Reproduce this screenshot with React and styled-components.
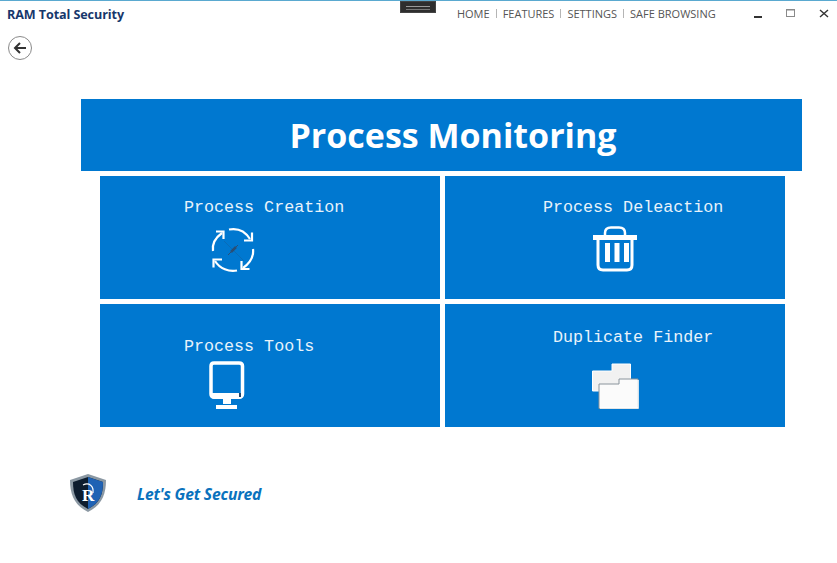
import React from "react";
import styled, { createGlobalStyle } from "styled-components";

const Global = createGlobalStyle`
  html, body {
    margin: 0;
    padding: 0;
    background: #fff;
  }
`;

const Page = styled.div`
  position: relative;
  width: 837px;
  height: 563px;
  box-sizing: border-box;
  border-top: 1px solid #5aa9d0;
  overflow: hidden;
  background: #fff;
  font-family: "Open Sans", "Noto Sans", sans-serif;
`;

const TitleBar = styled.header`
  display: flex;
  align-items: flex-start;
  height: 26px;
`;

const AppName = styled.div`
  padding: 5px 0 0 7px;
  font-size: 12.6px;
  line-height: 17px;
  font-weight: 700;
  letter-spacing: -0.1px;
  color: #17376b;
`;

const Nav = styled.nav`
  display: flex;
  align-items: center;
  margin-left: 333px;
  padding-top: 5px;
  height: 15px;
`;

const NavItem = styled.span`
  font-size: 11px;
  line-height: 15px;
  color: #555;
`;

const NavSep = styled.span`
  width: 1px;
  height: 9px;
  margin: 0 6px;
  background: #b5b5b5;
`;

const WindowButtons = styled.div`
  display: flex;
  margin-left: 37px;
  gap: 23px;
  padding-top: 8px;
`;

const WinIcon = styled.svg`
  display: block;
  width: 10px;
  height: 10px;
`;

const Handle = styled.div`
  position: absolute;
  top: 0;
  left: 400px;
  width: 36px;
  height: 12px;
  box-sizing: border-box;
  background: #2e2e2e;
  border: 1px solid #444;
  &::after {
    content: "";
    position: absolute;
    left: 5px;
    right: 5px;
    top: 4px;
    height: 2px;
    border-top: 1px solid #999;
    border-bottom: 1px solid #777;
  }
`;

const BackButton = styled.button`
  display: flex;
  align-items: center;
  justify-content: center;
  width: 24px;
  height: 24px;
  margin: 9px 0 0 8px;
  padding: 0;
  box-sizing: border-box;
  border: 1px solid #8a8a8a;
  border-radius: 50%;
  background: #fff;
`;

const Main = styled.main`
  width: 721px;
  margin: 39px 0 0 81px;
`;

const Banner = styled.h1`
  display: flex;
  align-items: center;
  justify-content: center;
  height: 72px;
  margin: 0;
  padding-left: 23px;
  box-sizing: border-box;
  background: #0078d0;
  color: #fff;
  font-size: 34px;
  font-weight: 700;
`;

const Grid = styled.div`
  display: grid;
  grid-template-columns: 340px 340px;
  grid-auto-rows: 123px;
  gap: 5px;
  margin: 5px 0 0 19px;
`;

const Card = styled.div`
  padding-top: ${(p) => p.$top}px;
  box-sizing: border-box;
  background: #0078d0;
  color: #fff;
`;

const CardTitle = styled.div`
  margin-left: ${(p) => p.$x}px;
  font-family: "Liberation Mono", "DejaVu Sans Mono", monospace;
  font-size: 16.7px;
  line-height: 20px;
  white-space: pre;
  color: #e8f3fb;
`;

const CardIcon = styled.svg`
  display: block;
  margin: ${(p) => p.$gap}px 0 0 ${(p) => p.$x}px;
  overflow: visible;
`;

const Footer = styled.footer`
  display: flex;
  align-items: center;
  margin: 47px 0 0 69px;
  height: 38px;
`;

const Tagline = styled.span`
  margin: 2px 0 0 30px;
  font-size: 15.7px;
  font-weight: 700;
  font-style: italic;
  letter-spacing: -0.2px;
  color: #0a72bd;
`;

const CreationIcon = () => (
  <CardIcon $x={111} $gap={10} width="44" height="44" viewBox="0 0 44 44" fill="none" stroke="#fff" strokeWidth="2.200">
    <path d="M2 23 C1 16 4 10 11 5" />
    <path d="M5 3.500 H12.500 V11" />
    <path d="M18 1.500 C26 0 34 3 39 11" />
    <path d="M41 4.500 V12.500 H33" />
    <path d="M42 21 C43 29 39 35 32 40" />
    <path d="M38.500 41 H30.500 V33" />
    <path d="M26 42.500 C18 44 9 41 4 33" />
    <path d="M2.500 39.500 V31.500 H11" />
    <path d="M17 27 L27 17" stroke="#2a4f76" strokeWidth="1" />
    <path d="M20 24 L25 19" stroke="#2a4f76" strokeWidth="2.500" />
    <path d="M13 13 L33 33" stroke="#24466a" strokeWidth="0.500" opacity="0.5" />
  </CardIcon>
);

const TrashIcon = () => (
  <CardIcon $x={148} $gap={8} width="44" height="46" viewBox="0 0 44 46">
    <path fill="none" stroke="#fff" strokeWidth="2.500" d="M12 10 V7 Q12 1.500 18 1.500 H26 Q32 1.500 32 7 V10" />
    <path fill="#fff" d="M0 9 H44 V14 H0 Z" />
    <path fill="none" stroke="#fff" strokeWidth="3" d="M5 13 V39 Q5 44 10 44 H34 Q39 44 39 39 V13" />
    <path fill="#fff" d="M12 17 H17 V36 H12 Z M21.500 17 H26.500 V36 H21.500 Z M31 17 H36 V36 H31 Z" />
  </CardIcon>
);

const MonitorIcon = () => (
  <CardIcon $x={109} $gap={4} width="36" height="48" viewBox="0 0 36 48">
    <path fill="none" stroke="#fff" strokeWidth="3.500" d="M5 2 H30 Q33.500 2 33.500 5 V33 Q33.500 36 30 36 H5 Q2 36 2 33 V5 Q2 2 5 2 Z" />
    <path fill="#fff" d="M2 32 H34 V34 Q34 38 30 38 H5 Q2 38 2 34 Z" />
    <rect x="30" y="32" width="2" height="4" fill="#24466a" />
    <path fill="#fff" d="M14 38 H22 V43 H14 Z M7 44 H28 V48 H7 Z" />
  </CardIcon>
);

const FoldersIcon = () => (
  <CardIcon $x={147} $gap={15} width="47" height="46" viewBox="0 0 47 46">
    <path fill="#f1f1f1" stroke="#fff" d="M0.500 8 H20 V1 H38.500 V28 H0.500 Z" />
    <path fill="#fbfbfb" stroke="#8a949c" d="M7 22 V21 H27 V16 H46 V45.500 H7 Z" />
    <path fill="none" stroke="#fff" strokeWidth="1.500" d="M8 45 H46 V17" />
  </CardIcon>
);

const ShieldLogo = () => (
  <svg width="38" height="38" viewBox="0 0 38 38">
    <path fill="#8b98a3" d="M19 0 L37 6 C37 20 33 31 19 38 C5 31 1 20 1 6 Z" />
    <path fill="#0d1c2e" d="M19 3 L34 8 C34 20 31 29 19 35 C7 29 4 20 4 8 Z" />
    <path fill="#1f62b4" d="M19 3 L34 8 C34 20 31 29 19 35 Z" />
    <path fill="none" stroke="#fff" strokeWidth="1.200" d="M14 11 C20 8 25 12 24 19" />
    <text x="13" y="27" fill="#fff" fontFamily="Liberation Serif, serif" fontWeight="700" fontSize="17">R</text>
  </svg>
);

const App = () => (
  <Page>
    <Global />
    <Handle />
    <TitleBar>
      <AppName>RAM Total Security</AppName>
      <Nav>
        <NavItem>HOME</NavItem>
        <NavSep />
        <NavItem>FEATURES</NavItem>
        <NavSep />
        <NavItem>SETTINGS</NavItem>
        <NavSep />
        <NavItem>SAFE BROWSING</NavItem>
      </Nav>
      <WindowButtons>
        <WinIcon viewBox="0 0 10 10">
          <rect x="1" y="7" width="8" height="2" fill="#333" />
        </WinIcon>
        <WinIcon viewBox="0 0 10 10">
          <rect x="0.500" y="0.500" width="8" height="7" fill="none" stroke="#8a8a8a" />
          <rect x="0.500" y="0.500" width="8" height="1" fill="#8a8a8a" />
        </WinIcon>
        <WinIcon viewBox="0 0 10 10">
          <path d="M1 1 L9 8 M9 1 L1 8" stroke="#333" strokeWidth="1.400" />
        </WinIcon>
      </WindowButtons>
    </TitleBar>
    <BackButton aria-label="Back">
      <svg width="14" height="12" viewBox="0 0 14 12" fill="none" stroke="#333" strokeWidth="2">
        <path d="M13 6 H2 M7 1 L2 6 L7 11" />
      </svg>
    </BackButton>
    <Main>
      <Banner>Process Monitoring</Banner>
      <Grid>
        <Card $top={22}>
          <CardTitle $x={84}>Process Creation</CardTitle>
          <CreationIcon />
        </Card>
        <Card $top={22}>
          <CardTitle $x={98}>Process Deleaction</CardTitle>
          <TrashIcon />
        </Card>
        <Card $top={33}>
          <CardTitle $x={84}>Process Tools</CardTitle>
          <MonitorIcon />
        </Card>
        <Card $top={24}>
          <CardTitle $x={108}>Duplicate Finder</CardTitle>
          <FoldersIcon />
        </Card>
      </Grid>
    </Main>
    <Footer>
      <ShieldLogo />
      <Tagline>Let's Get Secured</Tagline>
    </Footer>
  </Page>
);

export default App;
